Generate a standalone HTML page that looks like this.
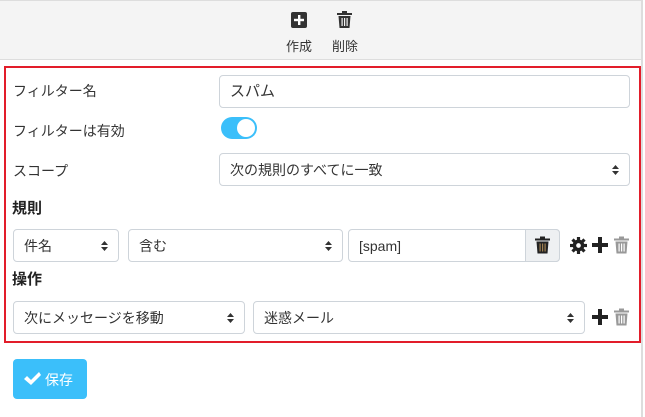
<!DOCTYPE html>
<html><head><meta charset="utf-8"><style>
*{box-sizing:border-box;margin:0;padding:0}
body{width:645px;height:417px;background:#fff;font-family:"Liberation Sans","Noto Sans CJK JP",sans-serif;font-size:14px;color:#212529;position:relative;overflow:hidden}
.abs{position:absolute}
.tb{left:0;top:0;width:642px;height:60px;background:#f4f4f4;border-top:1px solid #ddd;border-bottom:1px solid #ddd}
.vr{left:641px;top:0;width:2px;height:417px;background:#ddd}
.red{left:4px;top:66px;width:637px;height:277px;border:2px solid #e21d2a}
.lbl{font-size:14px;color:#333}
.ctl{border:1px solid #ced4da;border-radius:4px;background:#fff;height:33px;padding:0 10px;line-height:32px;font-size:14px;color:#333}
.arr{position:absolute;right:10px;top:10px;width:7px;height:12px}
.b{font-weight:bold;font-size:15px;color:#222}
</style></head><body>
<div class="abs tb"></div>
<div class="abs vr"></div>
<svg class="abs" style="left:291px;top:12px" width="16" height="16" viewBox="0 0 16 16"><rect x="0" y="0" width="16" height="16" rx="2" fill="#333"/><rect x="7" y="3" width="2.4" height="10" fill="#fff"/><rect x="3" y="6.8" width="10" height="2.4" fill="#fff"/></svg>
<svg class="abs" style="left:337px;top:11px" width="15" height="17" viewBox="0 0 15 17"><rect x="0" y="2" width="15" height="2" fill="#333"/><rect x="5" y="0" width="5" height="2" fill="#333"/><path d="M1.5 5h12l-1 12h-10z" fill="#333"/><rect x="4.5" y="7" width="1.2" height="8" fill="#f4f4f4"/><rect x="7" y="7" width="1.2" height="8" fill="#f4f4f4"/><rect x="9.5" y="7" width="1.2" height="8" fill="#f4f4f4"/></svg>
<div class="abs" style="left:286px;top:36px;font-size:13px;color:#333">作成</div>
<div class="abs" style="left:332px;top:36px;font-size:13px;color:#333">削除</div>
<div class="abs red"></div>
<div class="abs lbl" style="left:13px;top:81px">フィルター名</div>
<div class="abs ctl" style="left:219px;top:75px;width:411px;font-size:15px">スパム</div>
<div class="abs lbl" style="left:13px;top:121px">フィルターは有効</div>
<div class="abs" style="left:221px;top:117px;width:36px;height:22px;border-radius:11px;background:#3bbffa"></div>
<div class="abs" style="left:237px;top:119px;width:18px;height:18px;border-radius:9px;background:#fff"></div>
<div class="abs lbl" style="left:13px;top:161px">スコープ</div>
<div class="abs ctl" style="left:219px;top:153px;width:411px">次の規則のすべてに一致<svg class="arr" viewBox="0 0 7 12"><path d="M0 5L3.5 1 7 5zM0 7l3.5 4L7 7z" fill="#333"/></svg></div>
<div class="abs b" style="left:12px;top:197px">規則</div>
<div class="abs ctl" style="left:13px;top:229px;width:106px">件名<svg class="arr" viewBox="0 0 7 12"><path d="M0 5L3.5 1 7 5zM0 7l3.5 4L7 7z" fill="#333"/></svg></div>
<div class="abs ctl" style="left:128px;top:229px;width:215px">含む<svg class="arr" viewBox="0 0 7 12"><path d="M0 5L3.5 1 7 5zM0 7l3.5 4L7 7z" fill="#333"/></svg></div>
<div class="abs ctl" style="left:348px;top:229px;width:212px">[spam]</div>
<div class="abs" style="left:525px;top:229px;width:35px;height:33px;background:#eef0f2;border:1px solid #ced4da;border-radius:0 4px 4px 0"></div>
<svg class="abs" style="left:535px;top:236px" width="15" height="18" viewBox="0 0 15 17"><rect x="0" y="2" width="15" height="2" fill="#222"/><rect x="5" y="0" width="5" height="2" fill="#222"/><path d="M1.5 5h12l-1 12h-10z" fill="#222"/><rect x="4.5" y="7" width="1.2" height="8" fill="#a08050"/><rect x="7" y="7" width="1.2" height="8" fill="#a08050"/><rect x="9.5" y="7" width="1.2" height="8" fill="#a08050"/></svg>
<svg class="abs" style="left:570px;top:237px" width="17" height="17" viewBox="0 0 16 16"><g fill="#222"><circle cx="8" cy="8" r="5.5"/><rect x="6.5" y="0" width="3" height="16"/><rect x="0" y="6.5" width="16" height="3"/><rect x="6.5" y="0" width="3" height="16" transform="rotate(45 8 8)"/><rect x="6.5" y="0" width="3" height="16" transform="rotate(-45 8 8)"/></g><circle cx="8" cy="8" r="2.2" fill="#fff"/></svg>
<svg class="abs" style="left:592px;top:237px" width="16" height="16" viewBox="0 0 16 16"><rect x="6" y="0" width="4" height="16" fill="#222"/><rect x="0" y="6" width="16" height="4" fill="#222"/></svg>
<svg class="abs" style="left:614px;top:236px" width="15" height="18" viewBox="0 0 15 17"><rect x="0" y="2" width="15" height="2" fill="#999"/><rect x="5" y="0" width="5" height="2" fill="#999"/><path d="M1.5 5h12l-1 12h-10z" fill="#999"/><rect x="4.5" y="7" width="1.2" height="8" fill="#fff"/><rect x="7" y="7" width="1.2" height="8" fill="#fff"/><rect x="9.5" y="7" width="1.2" height="8" fill="#fff"/></svg>
<div class="abs b" style="left:12px;top:268px">操作</div>
<div class="abs ctl" style="left:13px;top:301px;width:232px">次にメッセージを移動<svg class="arr" viewBox="0 0 7 12"><path d="M0 5L3.5 1 7 5zM0 7l3.5 4L7 7z" fill="#333"/></svg></div>
<div class="abs ctl" style="left:253px;top:301px;width:332px">迷惑メール<svg class="arr" viewBox="0 0 7 12"><path d="M0 5L3.5 1 7 5zM0 7l3.5 4L7 7z" fill="#333"/></svg></div>
<svg class="abs" style="left:592px;top:309px" width="16" height="16" viewBox="0 0 16 16"><rect x="6" y="0" width="4" height="16" fill="#222"/><rect x="0" y="6" width="16" height="4" fill="#222"/></svg>
<svg class="abs" style="left:614px;top:308px" width="15" height="18" viewBox="0 0 15 17"><rect x="0" y="2" width="15" height="2" fill="#999"/><rect x="5" y="0" width="5" height="2" fill="#999"/><path d="M1.5 5h12l-1 12h-10z" fill="#999"/><rect x="4.5" y="7" width="1.2" height="8" fill="#fff"/><rect x="7" y="7" width="1.2" height="8" fill="#fff"/><rect x="9.5" y="7" width="1.2" height="8" fill="#fff"/></svg>
<div class="abs" style="left:13px;top:359px;width:74px;height:40px;background:#3bbffa;border-radius:4px"></div>
<svg class="abs" style="left:23px;top:371px" width="18" height="15" viewBox="0 0 18 15"><path d="M1 8l3-3 4 4 8-8 2 3-10 10z" fill="#fff"/></svg>
<div class="abs" style="left:45px;top:370px;color:#fff;font-size:14px">保存</div>
</body></html>
